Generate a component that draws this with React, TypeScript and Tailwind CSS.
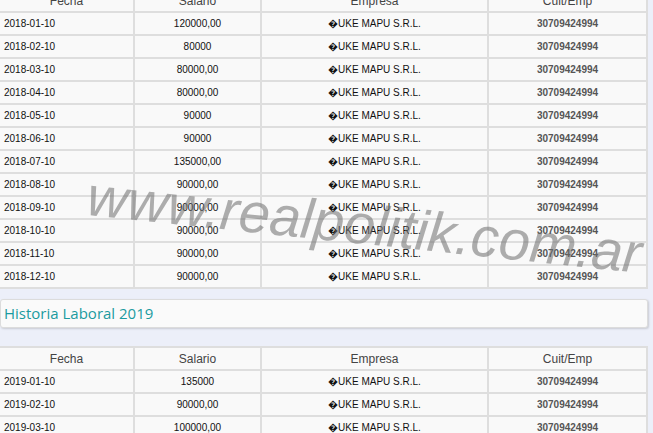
import type { ReactNode } from 'react';

type Row = { fecha: string; salario: string };

const EMPRESA = '\uFFFDUKE MAPU S.R.L.';
const CUIT = '30709424994';

const rows2018: Row[] = [
  { fecha: '2018-01-10', salario: '120000,00' },
  { fecha: '2018-02-10', salario: '80000' },
  { fecha: '2018-03-10', salario: '80000,00' },
  { fecha: '2018-04-10', salario: '80000,00' },
  { fecha: '2018-05-10', salario: '90000' },
  { fecha: '2018-06-10', salario: '90000' },
  { fecha: '2018-07-10', salario: '135000,00' },
  { fecha: '2018-08-10', salario: '90000,00' },
  { fecha: '2018-09-10', salario: '90000,00' },
  { fecha: '2018-10-10', salario: '90000,00' },
  { fecha: '2018-11-10', salario: '90000,00' },
  { fecha: '2018-12-10', salario: '90000,00' }
];

const rows2019: Row[] = [
  { fecha: '2019-01-10', salario: '135000' },
  { fecha: '2019-02-10', salario: '90000,00' },
  { fecha: '2019-03-10', salario: '100000,00' }
];

const Cell = ({ children, className = '' }: { children: ReactNode; className?: string }) => (
  <td className={`h-[21px] bg-[#f9f9f9] p-0 align-middle ${className}`}>{children}</td>
);

const SalaryTable = ({ rows, className = '' }: { rows: Row[]; className?: string }) => (
  <div className={`w-[648px] overflow-hidden ${className}`}>
    <table className="-ml-[2px] w-[650px] table-fixed border-separate border-spacing-[2px] bg-[#dedede] shadow-[1px_1px_2px_rgba(0,0,0,0.2)]">
      <colgroup>
        <col className="w-[133px]" />
        <col className="w-[125px]" />
        <col className="w-[225px]" />
        <col />
      </colgroup>
      <thead>
        <tr className="text-[12px] text-[#444]">
          <Cell className="text-center">Fecha</Cell>
          <Cell className="text-center">Salario</Cell>
          <Cell className="text-center">Empresa</Cell>
          <Cell className="text-center">Cuit/Emp</Cell>
        </tr>
      </thead>
      <tbody>
        {rows.map((row) => (
          <tr key={row.fecha} className="text-[10px] text-[#111]">
            <Cell className="pl-[4px]">{row.fecha}</Cell>
            <Cell className="text-center">{row.salario}</Cell>
            <Cell className="text-center">{EMPRESA}</Cell>
            <Cell className="text-center font-bold text-[#555]">{CUIT}</Cell>
          </tr>
        ))}
      </tbody>
    </table>
  </div>
);

export default function App() {
  return (
    <div className="relative h-[433px] w-[653px] overflow-hidden bg-[#eceff9] font-['Liberation_Sans',Arial,sans-serif]">
      <SalaryTable rows={rows2018} className="-mt-[12px]" />

      <div className="mt-[10px] flex h-[29px] w-[648px] items-center rounded-[3px] border border-[#dcdcdc] bg-[#fafafa] pl-[3px] shadow-[1px_1px_2px_rgba(0,0,0,0.15)]">
        <h2 className="font-['Open_Sans',sans-serif] text-[15px] text-[#1a9ba0]">Historia Laboral 2019</h2>
      </div>

      <SalaryTable rows={rows2019} className="mt-[18px]" />

      <div className="pointer-events-none absolute left-[86px] top-[197px] rotate-[6deg] whitespace-nowrap text-[56px] italic leading-none text-[rgba(110,110,110,0.55)]">
        www.realpolitik.com.ar
      </div>
    </div>
  );
}
